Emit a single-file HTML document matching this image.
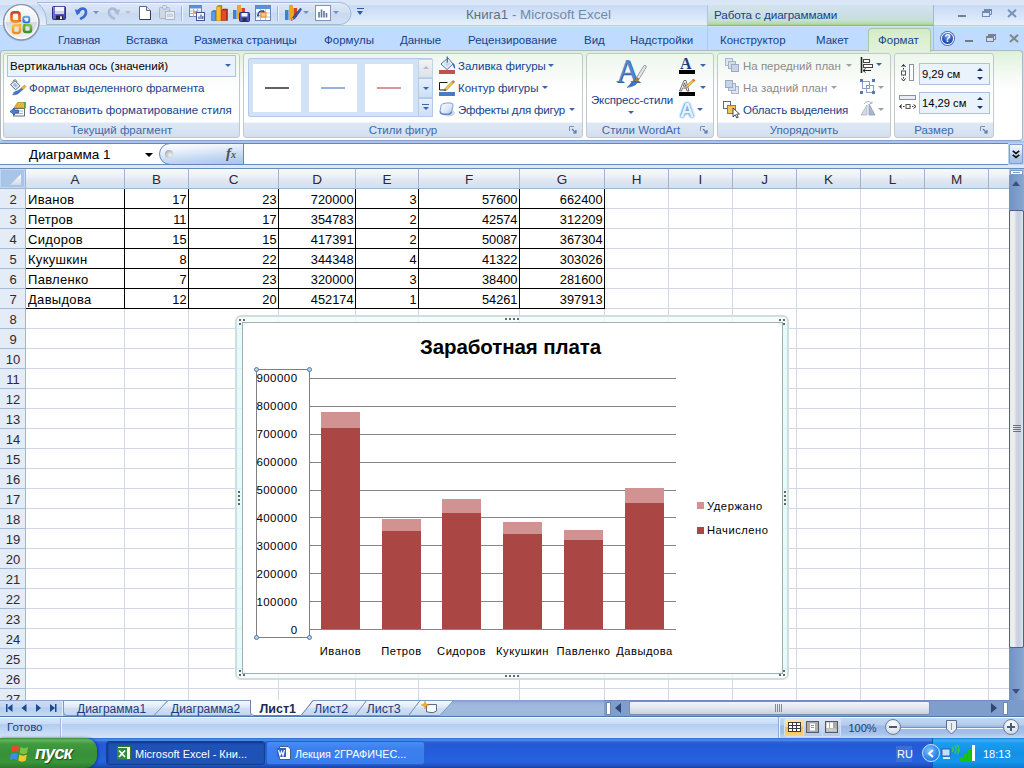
<!DOCTYPE html>
<html><head><meta charset="utf-8">
<style>
*{box-sizing:border-box;margin:0;padding:0}
html,body{width:1024px;height:768px;overflow:hidden;background:#fff}
body{font-family:"Liberation Sans",sans-serif;font-size:11.5px;color:#15428b;position:relative}
.a{position:absolute}
svg{position:absolute;overflow:visible}
.t{position:absolute;white-space:nowrap;line-height:14px;height:14px}
/* title + tabs */
#titlebar{left:0;top:0;width:1024px;height:27px;background:linear-gradient(#d9e6f9 0,#dae6f7 1px,#dbe6f6 5px,#c8dbf6 5px,#d3e3f8 14px,#e4eefc 24px,#e4f4fe 25px,#b0cdf5 25px,#b0cdf5 26px,#d4e3f6 26px,#d4e3f6 27px)}
#tabrow{left:0;top:27px;width:1024px;height:23px;background:#bfdbff}
#ctxhead{left:707px;top:5px;width:227px;height:21px;background:linear-gradient(#d3e3ee 0,#cbdee6 50%,#c5dfd2 75%,#aedb9b 92%,#7cc95a 96%,#7cc95a 100%);border-left:1px solid #b4c6d6;border-right:1px solid #a8b8c8}
#ctxtabs{left:707px;top:26px;width:227px;height:24px;border-left:1px solid #b3cbe8;border-right:1px solid #a9bdd6}
.tab{position:absolute;top:33px;font-size:11.5px;color:#15428b;white-space:nowrap;line-height:14px}
/* ribbon */
#ribtop{left:0;top:50px;width:1024px;height:92px;background:#bfdbff}
#ribbon{left:0;top:50px;width:1023px;height:91px;border:1px solid #b1b8c0;border-bottom-color:#86a3c9;border-radius:4px;background:linear-gradient(#d9efd7 0,#e0f3dd 3px,#eaf6e8 12px,#f6fbf5 26px,#ffffff 40px,#fff 100%)}
.grp{position:absolute;top:53px;height:85px;border:1px solid #c3c8ce;border-radius:3px;background:linear-gradient(#eef7ec 0,#f4f9f3 14px,#fbfdfb 28px,#fff 40px,#fff 68px,#dfe8f5 69px,#d2deef 84px)}
.gl{position:absolute;top:123px;font-size:11.5px;color:#3e6aaa;white-space:nowrap;line-height:14px;text-align:center}
.dis{color:#8c8c8c}
.arr{position:absolute;width:0;height:0;border-left:3px solid transparent;border-right:3px solid transparent;border-top:3px solid #3a66a7}
.arr.g{border-top-color:#a0a0a0}
/* formula bar */
#fbar{left:0;top:141px;width:1024px;height:28px;background:linear-gradient(#aac5ea 0,#aac5ea 2px,#6487b8 2px,#6487b8 3px,#fff 3px,#fff 23px,#6b8dbd 23px,#6b8dbd 24px,#dbe8f8 24px,#dbe8f8 27px,#6b8dbd 27px,#6b8dbd 28px)}
/* grid */
#grid{left:0;top:169px;width:1009px;height:531px;background:#fff;overflow:hidden}
.ch{position:absolute;top:0;height:20px;background:linear-gradient(#f7fafd 0,#ebf0f7 8px,#e0e7f2 11px,#d6dfec 19px);border-right:1px solid #9eb6ce;border-bottom:1px solid #9eb6ce;text-align:center;font-size:13.5px;line-height:21px;color:#2a2a30}
.rh{position:absolute;left:0;width:26px;height:20px;background:#e4ecf7;border-right:1px solid #9eb6ce;border-bottom:1px solid #a5bad4;text-align:center;font-size:13px;padding-left:1px;line-height:21px;color:#2a2a30}
.vl{position:absolute;top:20px;width:1px;height:512px;background:#d0d7e5}
.hl{position:absolute;left:26px;height:1px;width:984px;background:#d0d7e5}
.c{position:absolute;font-size:13px;letter-spacing:.3px;color:#000;line-height:21px;height:20px;white-space:nowrap;overflow:hidden}
.r{text-align:right;letter-spacing:0;font-size:12.8px;padding-right:.5px}
.cf{font-size:11.5px;letter-spacing:.45px;color:#000;line-height:14px}
.bv{position:absolute;width:1px;background:#000}
.bh{position:absolute;height:1px;background:#000}
</style></head>
<body>
<div class="a" id="titlebar"></div>
<div class="a" id="tabrow"></div>
<div class="a" id="ctxhead"></div>
<div class="a" id="ctxtabs"></div>
<div class="a" id="ribtop"></div>
<div class="a" id="ribbon"></div>
<div class="a" id="fbar"></div>
<!-- QAT pill -->
<svg style="left:0;top:0" width="360" height="28" viewBox="0 0 360 28">
 <defs>
  <linearGradient id="qp" x1="0" y1="0" x2="0" y2="1"><stop offset="0" stop-color="#dfe9f7"/><stop offset=".45" stop-color="#d0dff3"/><stop offset=".5" stop-color="#c8d9f0"/><stop offset="1" stop-color="#d2e1f5"/></linearGradient>
  <linearGradient id="og" x1="0" y1="0" x2="0" y2="1"><stop offset="0" stop-color="#ffffff"/><stop offset=".48" stop-color="#eceef3"/><stop offset=".5" stop-color="#d3d8e1"/><stop offset="1" stop-color="#f3f5f8"/></linearGradient>
  <linearGradient id="lr" x1="0" y1="0" x2="0" y2="1"><stop offset="0" stop-color="#d9401c"/><stop offset="1" stop-color="#f28c1e"/></linearGradient>
  <linearGradient id="ly" x1="0" y1="0" x2="0" y2="1"><stop offset="0" stop-color="#fbbf3a"/><stop offset="1" stop-color="#ef8f16"/></linearGradient>
  <linearGradient id="lg" x1="0" y1="0" x2="0" y2="1"><stop offset="0" stop-color="#7fc043"/><stop offset="1" stop-color="#3f8f2a"/></linearGradient>
  <linearGradient id="lb" x1="0" y1="0" x2="0" y2="1"><stop offset="0" stop-color="#5aa6e6"/><stop offset="1" stop-color="#2a6fc4"/></linearGradient>
 </defs>
 <path d="M37 2.500 H340 A11 11 0 0 1 340 24.500 H46.500 A25.500 25.500 0 0 0 37 2.500 Z" fill="url(#qp)" stroke="#a2b9d9"/>
 <path d="M38 3.500 H340" stroke="#eef4fc" fill="none"/>
</svg>
<!-- Office orb -->
<svg style="left:0;top:0" width="44" height="46" viewBox="0 0 44 46">
 <circle cx="21.300" cy="23" r="18.400" fill="rgba(90,110,150,.25)"/>
 <circle cx="21.300" cy="22.300" r="17.700" fill="url(#og)" stroke="#8893a8" stroke-width="1.400"/>
 <circle cx="21.300" cy="22.300" r="16.300" fill="none" stroke="#fff" stroke-width="1" opacity=".8"/>
 <rect x="11.500" y="12.300" width="8" height="9" rx="2.400" fill="none" stroke="url(#lr)" stroke-width="2.700"/>
 <rect x="23.300" y="16.800" width="6" height="5.600" rx="1.800" fill="none" stroke="url(#lb)" stroke-width="1.900"/>
 <rect x="13" y="25.300" width="7" height="7.600" rx="2.200" fill="none" stroke="url(#ly)" stroke-width="2.500"/>
 <rect x="24" y="25" width="7" height="7" rx="2.200" fill="none" stroke="url(#lg)" stroke-width="2.700"/>
 <rect x="17" y="17" width="8" height="12" fill="#eef0f4" opacity=".0"/>
 <circle cx="20.200" cy="20.800" r="1.100" fill="#e0531f"/><circle cx="24.300" cy="20.800" r="1.100" fill="#3b8ad6"/>
 <circle cx="20.200" cy="25" r="1.100" fill="#f5a81c"/><circle cx="24.300" cy="25" r="1.100" fill="#5aa531"/>
</svg>
<!-- QAT icons -->
<svg style="left:52px;top:6px" width="14" height="14" viewBox="0 0 14 14"><defs><linearGradient id="sv" x1="0" y1="0" x2="1" y2="1"><stop offset="0" stop-color="#8a88dc"/><stop offset="1" stop-color="#3f3aa8"/></linearGradient></defs><rect x=".5" y=".5" width="13" height="13" rx="1" fill="url(#sv)" stroke="#2e2a86"/><rect x="3" y=".8" width="9" height="7" fill="#f4f5fa"/><rect x="3" y="5" width="9" height="2.800" fill="#cfd2e2"/><rect x="4" y="9.500" width="7" height="4" fill="#22223c"/><rect x="8" y="10.300" width="2" height="2.800" fill="#e8e9f4"/></svg>
<svg style="left:74px;top:5px" width="15" height="15" viewBox="0 0 15 15"><path d="M4.500 7.500 C5 3 11.500 2 12 6.500 C12.300 10 9.500 12.500 7 13.500" fill="none" stroke="#3b68d2" stroke-width="2.600" stroke-linecap="round"/><path d="M.8 4.500 L7.500 5 L3 10.500Z" fill="#3b68d2"/></svg>
<div class="arr" style="left:93px;top:11px;border-top-color:#6f8fc3"></div>
<svg style="left:106px;top:5px" width="15" height="15" viewBox="0 0 15 15"><path d="M10.500 7.500 C10 3 3.500 2 3 6.500 C2.700 10 5.500 12.500 8 13.500" fill="none" stroke="#a9bbd8" stroke-width="2.600" stroke-linecap="round"/><path d="M14.200 4.500 L7.500 5 L12 10.500Z" fill="#a9bbd8"/></svg>
<div class="arr" style="left:125px;top:11px;border-top-color:#b3c0d6"></div>
<svg style="left:139px;top:6px" width="12" height="14" viewBox="0 0 12 14"><path d="M.5 .5 H7.500 L11.500 4.500 V13.500 H.5 Z" fill="#fff" stroke="#5d6a82"/><path d="M7.500 .5 V4.500 H11.500" fill="#dfe5ee" stroke="#5d6a82"/><path d="M1 13.500 H11.500 V5" fill="none" stroke="#2f3a55" stroke-width="1"/></svg>
<svg style="left:159px;top:5px" width="16" height="15" viewBox="0 0 16 15"><rect x=".5" y="2.500" width="10" height="11" rx="1" fill="#cfd7e4" stroke="#a9b5c9"/><rect x="3.500" y=".5" width="4" height="3.500" rx="1" fill="#dfe5ef" stroke="#a9b5c9"/><rect x="6.500" y="6.500" width="9" height="8" fill="#e9edf4" stroke="#a9b5c9"/><rect x="8.500" y="9" width="5" height="2.500" fill="#d3dae6" stroke="#b6c0d1" stroke-width=".6"/></svg>
<div class="a" style="left:181px;top:6px;width:1px;height:15px;background:#9fb5d3"></div><div class="a" style="left:182px;top:6px;width:1px;height:15px;background:#eef4fc"></div>
<svg style="left:189px;top:5px" width="17" height="17" viewBox="0 0 17 17"><rect x=".5" y=".5" width="12" height="11" fill="#fff" stroke="#6f86b5"/><rect x="1" y="1" width="11" height="2.500" fill="#5b8fd8"/><path d="M1 6h11M1 8.500h11M4.500 3.500v8M8.500 3.500v8" stroke="#a9b9d6"/><rect x="5" y="6" width="3.500" height="2.500" fill="#f59a3c"/><rect x="7.500" y="7.500" width="8" height="8" fill="#f4f6fb" stroke="#3f5484"/><path d="M10 14v-2.500M12 14v-4.500M13.800 14v-3" stroke="#4a6aa8" stroke-width="1.300"/></svg>
<svg style="left:211px;top:5px" width="17" height="16" viewBox="0 0 17 16"><path d="M.5 7 L2 5.500 H5.500 L5.500 15.500 H.5Z" fill="#3f7fd0" stroke="#2a5aa5" stroke-width=".5"/><rect x=".5" y="7" width="3.500" height="8.500" fill="#5b9be8"/><path d="M5.500 2 L7 .5 H11 V15.500 H5.500Z" fill="#c98a10" stroke="#9a6a08" stroke-width=".5"/><rect x="5.500" y="2" width="4" height="13.500" fill="#f7c02a"/><path d="M10.500 5.500 L12 4 H16.500 V15.500 H10.500Z" fill="#b52a18" stroke="#8a2010" stroke-width=".5"/><rect x="10.500" y="5.500" width="4.500" height="10" fill="#e54a30"/></svg>
<svg style="left:232px;top:4px" width="18" height="18" viewBox="0 0 18 18"><rect x="1" y="6" width="3.500" height="9" fill="#3f7fd0"/><rect x="5" y="1" width="4" height="14" fill="#f2a620"/><rect x="9.500" y="4" width="3.500" height="8" fill="#d9402a"/><rect x="7.500" y="8.500" width="10" height="9" rx="1" fill="#4a52b5" stroke="#2b2f82"/><rect x="9.500" y="9" width="6" height="3.500" fill="#f2f3fb"/><rect x="10.500" y="14" width="4" height="3" fill="#2a2b56"/></svg>
<svg style="left:255px;top:5px" width="16" height="16" viewBox="0 0 16 16"><rect x=".5" y=".5" width="15" height="15" fill="#fff" stroke="#6f86b5"/><rect x="1" y="1" width="14" height="3" fill="#5b8fd8"/><path d="M1 8h14M1 12h14M5.500 4v11M10.500 4v11" stroke="#b4c2dc"/><rect x="6" y="7.500" width="5" height="4.500" fill="#fbc48e" stroke="#ee8a2c"/><path d="M3 11 C2.500 7 6 5 9 6.500" fill="none" stroke="#2b4aa0" stroke-width="1.400"/><path d="M1.500 9.500 L3 12 L5 10Z M8 4.800 L10 6.800 L7.500 7.800Z" fill="#2b4aa0"/></svg>
<div class="a" style="left:277px;top:6px;width:1px;height:15px;background:#9fb5d3"></div><div class="a" style="left:278px;top:6px;width:1px;height:15px;background:#eef4fc"></div>
<svg style="left:284px;top:4px" width="18" height="18" viewBox="0 0 18 18"><rect x="1" y="6" width="3.500" height="10" fill="#3f7fd0"/><rect x="5" y="1" width="4" height="15" fill="#f2a620"/><rect x="9.500" y="4" width="3.500" height="9" fill="#d9402a"/><path d="M16.500 4 L9 13 L7 16.500 L10.500 15 L17.500 5.500 Z" fill="#3559b4" stroke="#1f3680" stroke-width=".6"/><path d="M7 16.500 L8.200 13.800 L10.200 15.200 Z" fill="#e8b04a"/></svg>
<div class="arr" style="left:303px;top:11px;border-top-color:#6f8fc3"></div>
<svg style="left:315px;top:5px" width="16" height="16" viewBox="0 0 16 16"><rect x=".5" y=".5" width="15" height="15" fill="#fff" stroke="#7f93b8"/><path d="M4 12.500V7M6.500 12.500V4.500M9 12.500V6M11.500 12.500V8" stroke="#5a76ad" stroke-width="1.600"/></svg>
<div class="arr" style="left:333px;top:11px;border-top-color:#6f8fc3"></div>
<div class="a" style="left:357px;top:8px;width:7px;height:1px;background:#34569c"></div>
<div class="arr" style="left:357px;top:11px;border-left-width:3.5px;border-right-width:3.5px;border-top-width:4px;border-top-color:#34569c"></div>
<!-- title text -->
<div class="t" style="left:466px;top:7px;font-size:13.4px;color:#7189ab;line-height:15px"><span style="color:#646f80">Книга1</span> - Microsoft Excel</div>
<div class="t" style="left:714px;top:8px;font-size:11.7px;letter-spacing:-.1px;color:#15428b">Работа с диаграммами</div>
<!-- window controls -->
<div class="a" style="left:958px;top:15px;width:8px;height:2px;background:#76808f"></div>
<svg style="left:982px;top:9px" width="10" height="8" viewBox="0 0 10 8"><path d="M2.500 .5 H9.500 V5.500 H7.500" fill="none" stroke="#7088b0"/><rect x="2" y="0" width="8" height="2" fill="#7088b0"/><rect x=".5" y="2.500" width="7" height="5" fill="#dce7f7" stroke="#7088b0"/><rect x="0" y="2" width="8" height="2" fill="#7088b0"/></svg>
<svg style="left:1007px;top:9px" width="10" height="9" viewBox="0 0 10 9"><path d="M1 .8 L9 8 M9 .8 L1 8" stroke="#7a92b8" stroke-width="2"/></svg>
<!-- tabs -->
<div class="tab" style="left:58px;letter-spacing:-.25px">Главная</div>
<div class="tab" style="left:126px;letter-spacing:-.2px">Вставка</div>
<div class="tab" style="left:194px;letter-spacing:-.1px">Разметка страницы</div>
<div class="tab" style="left:324px">Формулы</div>
<div class="tab" style="left:400px;letter-spacing:-.1px">Данные</div>
<div class="tab" style="left:468px">Рецензирование</div>
<div class="tab" style="left:584px">Вид</div>
<div class="tab" style="left:630px">Надстройки</div>
<div class="tab" style="left:720px">Конструктор</div>
<div class="tab" style="left:816px">Макет</div>
<div class="a" style="left:868px;top:28px;width:63px;height:24px;border:1px solid #a9c7a0;border-bottom:none;border-radius:4px 4px 0 0;background:linear-gradient(#d3ebc6 0,#dbefd0 40%,#e2f2da 100%)"></div>
<div class="tab" style="left:878px">Формат</div>
<!-- help + doc controls -->
<div class="a" style="left:941px;top:32px;width:13px;height:13px;border-radius:50%;background:radial-gradient(circle at 50% 30%,#7fa4ea,#2a56bb 55%,#1a388a);border:1px solid #eef3fc;box-shadow:0 0 0 1px #4f6fb0"></div>
<div class="t" style="left:944.500px;top:32px;font-size:10px;font-weight:bold;color:#fff;line-height:13px">?</div>
<div class="a" style="left:965px;top:40px;width:8px;height:2px;background:#777b82"></div>
<svg style="left:986px;top:34px" width="10" height="8" viewBox="0 0 10 8"><path d="M2.500 .5 H9.500 V5.500 H7.500" fill="none" stroke="#7b7f86"/><rect x="2" y="0" width="8" height="2" fill="#7b7f86"/><rect x=".5" y="2.500" width="7" height="5" fill="#c5dcfb" stroke="#7b7f86"/><rect x="0" y="2" width="8" height="2" fill="#7b7f86"/></svg>
<svg style="left:1009px;top:34px" width="10" height="9" viewBox="0 0 10 9"><path d="M1 .8 L9 8 M9 .8 L1 8" stroke="#82868e" stroke-width="2"/></svg>
<!-- groups -->
<div class="grp" style="left:3px;width:237px"></div>
<div class="grp" style="left:243px;width:340px"></div>
<div class="grp" style="left:586px;width:128px"></div>
<div class="grp" style="left:717px;width:174px"></div>
<div class="grp" style="left:894px;width:100px"></div>
<div class="gl" style="left:3px;width:237px">Текущий фрагмент</div>
<div class="gl" style="left:243px;width:320px">Стили фигур</div>
<div class="gl" style="left:586px;width:110px">Стили WordArt</div>
<div class="gl" style="left:717px;width:174px">Упорядочить</div>
<div class="gl" style="left:894px;width:80px">Размер</div>
<!-- dialog launchers -->
<svg style="left:569px;top:126px" width="8" height="8" viewBox="0 0 8 8"><path d="M.5 5V.5H5" fill="none" stroke="#7c93b5"/><path d="M3 3L7 7M7 4V7H4" fill="none" stroke="#5c7aa8" stroke-width="1.200"/></svg>
<svg style="left:700px;top:126px" width="8" height="8" viewBox="0 0 8 8"><path d="M.5 5V.5H5" fill="none" stroke="#7c93b5"/><path d="M3 3L7 7M7 4V7H4" fill="none" stroke="#5c7aa8" stroke-width="1.200"/></svg>
<svg style="left:980px;top:126px" width="8" height="8" viewBox="0 0 8 8"><path d="M.5 5V.5H5" fill="none" stroke="#7c93b5"/><path d="M3 3L7 7M7 4V7H4" fill="none" stroke="#5c7aa8" stroke-width="1.200"/></svg>
<!-- group 1 -->
<div class="a" style="left:7px;top:55px;width:229px;height:22px;border:1px solid #abc1de;background:#eaf2fb"></div>
<div class="t" style="left:10px;top:59px;color:#000;font-size:11.6px">Вертикальная ось (значений)</div>
<div class="arr" style="left:225px;top:64px"></div>
<svg style="left:9px;top:79px" width="18" height="18" viewBox="0 0 18 18"><path d="M4 2.500 C4.500 .3 7.500 .3 7.800 2.800" fill="none" stroke="#4a5a7a" stroke-width=".9"/><path d="M1.500 5.500 L6 1.800 L11 6.800 L6.500 10.800 Z" fill="#fcfdff" stroke="#3f4d6b" stroke-width=".9"/><path d="M3.500 5.700 L6 3.600 L9 6.700 L6.500 8.800Z" fill="#9dbde8"/><path d="M3.500 15.500 C6 16.500 9.500 15 11.500 12.500 L14 10.500 L12.500 9 L10 11 C8 12.500 6 12.200 4.500 13.800 C5.500 14.200 4.500 15.200 3.500 15.500Z" fill="#3f78d0" stroke="#2a55a5" stroke-width=".5"/><path d="M12.300 9 L15.500 6 L17 7.500 L14 10.500Z" fill="#f0b73a" stroke="#9a6b14" stroke-width=".5"/></svg>
<div class="t" style="left:29px;top:81px">Формат выделенного фрагмента</div>
<svg style="left:9px;top:100px" width="18" height="18" viewBox="0 0 18 18"><rect x="4.500" y="8.500" width="11" height="7.500" fill="#fff" stroke="#5d6b85"/><path d="M6 11h8M6 13.500h8" stroke="#9fb1d0"/><path d="M5 8 L8.500 2.500 L16 2.500 L16 8 Z" fill="#f3c14a" stroke="#a6781a" stroke-width=".7"/><path d="M7 7.500 L9.500 3.500 M9.500 7.500 L12 3.500 M12 7.500 L14.500 3.500" stroke="#c58f1e" stroke-width=".7"/><rect x="15" y="2" width="1.800" height="6.500" fill="#5aa531"/><path d="M1 11.500 L5.500 8 V10 H9.500 V13 H5.500 V15Z" fill="#4e7fd0" stroke="#2a4f9a" stroke-width=".7"/></svg>
<div class="t" style="left:29px;top:103px">Восстановить форматирование стиля</div>
<!-- group 2: shape styles gallery -->
<div class="a" style="left:248px;top:58px;width:185px;height:59px;border:1px solid #b3cbe8;border-radius:2px;background:#d3e3f7"></div>
<div class="a" style="left:253px;top:64px;width:48px;height:48px;background:#fff"></div>
<div class="a" style="left:309px;top:64px;width:48px;height:48px;background:#fff"></div>
<div class="a" style="left:365px;top:64px;width:48px;height:48px;background:#fff"></div>
<div class="a" style="left:265px;top:87px;width:24px;height:2px;background:#636363"></div>
<div class="a" style="left:321px;top:87px;width:24px;height:2px;background:#95b3d7"></div>
<div class="a" style="left:377px;top:87px;width:24px;height:2px;background:#d99694"></div>
<div class="a" style="left:418px;top:59px;width:15px;height:19px;border:1px solid #c3d3e6;background:linear-gradient(#f1f3f6,#dde2ea)"></div>
<div class="a" style="left:418px;top:78px;width:15px;height:20px;border:1px solid #b3cbe8;background:linear-gradient(#e6effb,#cddff5)"></div>
<div class="a" style="left:418px;top:98px;width:15px;height:19px;border:1px solid #b3cbe8;background:linear-gradient(#e6effb,#cddff5)"></div>
<div class="arr g" style="left:423px;top:66px;border-top:none;border-bottom:3px solid #b6bcc6"></div>
<div class="arr" style="left:423px;top:87px"></div>
<div class="a" style="left:422px;top:104px;width:7px;height:1px;background:#3a66a7"></div>
<div class="arr" style="left:423px;top:107px"></div>
<svg style="left:438px;top:55px" width="18" height="20" viewBox="0 0 18 20"><rect x="1" y="15" width="16" height="4" fill="#c0504d"/><path d="M3 9 L10 3 L15 9 L9 14.500 Z" fill="#fbfdff" stroke="#3d6ab5" stroke-width="1"/><path d="M5.500 9 L10 5.200 L13 9 L9 12.500Z" fill="#c9dcf5"/><path d="M9.300 1.500 V7.500" stroke="#5a6a88" stroke-width="1.300"/><path d="M15 8 C17 9 17.500 11.500 17 14 C15.500 13 14.500 11 15 8Z" fill="#3f74c8"/></svg>
<div class="t" style="left:458px;top:59px">Заливка фигуры</div><div class="arr" style="left:548px;top:64px"></div>
<svg style="left:438px;top:79px" width="18" height="18" viewBox="0 0 18 18"><rect x="1" y="13" width="16" height="4" fill="#4a7ac2"/><path d="M9.500 3.500 H1.500 V11 H8" fill="none" stroke="#1a1a1a" stroke-width="1"/><path d="M14 2.500 L7 9.500 L6.300 11.800 L8.600 11 L15.500 4 Z" fill="#f4d14a" stroke="#8a6a1a" stroke-width=".6"/><path d="M14 2.500 L15.200 1.500 Q16.500 1.500 16.500 3 L15.500 4Z" fill="#e27a6a" stroke="#a04a3a" stroke-width=".4"/><path d="M6.300 11.800 L6.800 10 L8.300 11.200Z" fill="#333"/></svg>
<div class="t" style="left:458px;top:81px">Контур фигуры</div><div class="arr" style="left:542px;top:86px"></div>
<svg style="left:438px;top:101px" width="18" height="17" viewBox="0 0 18 17"><defs><linearGradient id="ef" x1="0" y1="0" x2="1" y2="1"><stop offset="0" stop-color="#ffffff"/><stop offset=".6" stop-color="#dbe6f8"/><stop offset="1" stop-color="#9db7e6"/></linearGradient></defs><ellipse cx="10.500" cy="12" rx="6.500" ry="3.500" fill="#c9cdd6" opacity=".8"/><path d="M4.500 3 Q8 1.500 13 2 Q15.500 2.300 15 5 L13.500 11 Q13 13.500 10 13.500 L4.500 13.200 Q1.500 13 2 10 L3 5 Q3.300 3.400 4.500 3Z" fill="url(#ef)" stroke="#7f9fdc" stroke-width="1"/><path d="M2.300 10.500 Q2.500 12.800 4.800 13 L10 13.300 Q12.800 13.200 13.400 11" fill="none" stroke="#5f86d0" stroke-width="1.300"/></svg>
<div class="t" style="left:458px;top:103px;letter-spacing:-.2px">Эффекты для фигур</div><div class="arr" style="left:569px;top:108px"></div>
<!-- group 3: WordArt -->
<div class="t" style="left:616px;top:52px;font-family:'Liberation Serif',serif;font-size:33px;line-height:38px;height:38px;color:#4f86cf;text-shadow:1px 1px 0 #2f5fa8">A</div>
<svg style="left:624px;top:64px" width="24" height="26" viewBox="0 0 24 26"><path d="M20 1.500 L12.500 13.500 L15 15.200 L22.300 3.200 Q22.500 1 20 1.500Z" fill="#e4e6ec" stroke="#7a7d88" stroke-width=".7"/><path d="M12.500 13.500 L15 15.200 L13 18.500 L10 16.800Z" fill="#a87f3a" stroke="#6f5220" stroke-width=".5"/><path d="M10 16.800 L13 18.500 C12 21.500 8 22.500 3 23.500 C6 21.500 6.500 18.500 10 16.800Z" fill="#3f74c8" stroke="#2a55a5" stroke-width=".5"/></svg>
<div class="t" style="left:591px;top:93px;letter-spacing:-.15px">Экспресс-стили</div>
<div class="arr" style="left:628px;top:111px"></div>
<div class="t" style="left:680px;top:56px;font-family:'Liberation Serif',serif;font-weight:bold;font-size:16px;line-height:16px;height:16px;color:#1f3e7c">A</div>
<div class="a" style="left:679px;top:70px;width:16px;height:4px;background:#000"></div>
<div class="arr" style="left:700px;top:64px"></div>
<svg style="left:678px;top:78px" width="18" height="14" viewBox="0 0 18 14"><path d="M1.500 13 L6 2.500 L8 2.500 L11 13 L9 13 L8.200 10 L4.500 10 L3.500 13Z M5.200 8.200 H7.700 L6.700 4.800Z" fill="#fff" stroke="#4a4a4a" stroke-width=".8" fill-rule="evenodd"/><path d="M15.500 1 L8.500 7.500 L7.800 9.800 L10 9 L17 2.500 Z" fill="#f3c24a" stroke="#8a6a1a" stroke-width=".5"/><path d="M15.500 1 L17 2.500 L16 3.400 L14.500 1.900Z" fill="#e2574a"/></svg>
<div class="a" style="left:679px;top:92px;width:16px;height:4px;background:#000"></div>
<div class="arr" style="left:700px;top:86px"></div>
<div class="t" style="left:680px;top:101px;font-size:19.5px;font-weight:bold;line-height:18px;height:18px;color:#e6f2fc;text-shadow:0 0 2px #4e9be0,0 0 3px #4e9be0,0 0 1px #2b7fd0">A</div>
<div class="arr" style="left:697px;top:108px"></div>
<!-- group 4: arrange -->
<svg style="left:724px;top:58px" width="16" height="16" viewBox="0 0 16 16"><rect x="1.500" y=".5" width="7" height="7" fill="#dfe6f1" stroke="#a9b7cf"/><rect x="4.500" y="3.500" width="7" height="7" fill="#d3dcea" stroke="#a3b2cb"/><rect x="7.500" y="6.500" width="7" height="7" fill="#c8d4e6" stroke="#9aabc6"/></svg>
<div class="t dis" style="left:743px;top:59px">На передний план</div><div class="arr g" style="left:846px;top:64px"></div>
<svg style="left:724px;top:80px" width="16" height="16" viewBox="0 0 16 16"><rect x="7.500" y="6.500" width="7" height="7" fill="#dfe6f1" stroke="#a9b7cf"/><rect x="4.500" y="3.500" width="7" height="7" fill="#d3dcea" stroke="#a3b2cb"/><rect x="1.500" y=".5" width="7" height="7" fill="#c8d4e6" stroke="#9aabc6"/></svg>
<div class="t dis" style="left:743px;top:81px">На задний план</div><div class="arr g" style="left:831px;top:86px"></div>
<svg style="left:723px;top:101px" width="18" height="17" viewBox="0 0 18 17"><rect x=".5" y=".5" width="7" height="7" fill="#fff" stroke="#5d6a80"/><rect x="4.500" y="4.500" width="8" height="8" fill="#f2c45a" stroke="#a67c1a"/><path d="M10 7 V16 L12.200 13.800 L13.800 17 L15.200 16.300 L13.700 13.200 L16.500 13 Z" fill="#fff" stroke="#222" stroke-width=".8"/></svg>
<div class="t" style="left:743px;top:103px;letter-spacing:-.15px">Область выделения</div>
<svg style="left:860px;top:57px" width="14" height="16" viewBox="0 0 14 16"><path d="M1.500 0 V16" stroke="#222" stroke-width="1.600"/><rect x="3.500" y="2.500" width="6" height="3" fill="#fff" stroke="#444"/><rect x="3.500" y="7.500" width="9" height="3" fill="#fff" stroke="#444"/><path d="M3 13.500 H11 M3 13.500 l2.500 -2 M3 13.500 l2.500 2" stroke="#222" stroke-width="1" fill="none"/></svg>
<div class="arr" style="left:876px;top:63px"></div>
<svg style="left:860px;top:79px" width="16" height="16" viewBox="0 0 16 16"><rect x="2.500" y="2.500" width="7" height="7" fill="none" stroke="#8a9ec6"/><rect x="6.500" y="6.500" width="7" height="7" fill="none" stroke="#8a9ec6"/><rect x="0" y="0" width="3" height="3" fill="#5a79b4"/><rect x="12" y="0" width="3" height="3" fill="#5a79b4"/><rect x="0" y="12" width="3" height="3" fill="#5a79b4"/><rect x="12" y="12" width="3" height="3" fill="#5a79b4"/></svg>
<div class="arr g" style="left:878px;top:86px"></div>
<svg style="left:860px;top:101px" width="16" height="15" viewBox="0 0 16 15"><path d="M7 14 L1 14 L7 4 Z" fill="#d3d9e4" stroke="#aab4c6" stroke-width=".8"/><path d="M9 14 L15 14 L9 3 Z" fill="#a9b6cc" stroke="#8e9db8" stroke-width=".8"/><path d="M4 3 C6 0 10 0 12 2.500 l-2 0 m2 0 l0 -2" fill="none" stroke="#aab4c6" stroke-width="1"/></svg>
<div class="arr g" style="left:878px;top:108px"></div>
<!-- group 5: size -->
<svg style="left:900px;top:64px" width="15" height="18" viewBox="0 0 15 18"><rect x="9.500" y=".5" width="4" height="16" fill="#fff" stroke="#8a93a6"/><path d="M3.500 1 V16" stroke="#333" stroke-dasharray="1.500 1.500"/><path d="M1.500 3 L3.500 .5 L5.500 3 M1.500 14.500 L3.500 17 L5.500 14.500" fill="none" stroke="#222"/><rect x="1.500" y="7" width="4" height="4" fill="#fff" stroke="#555"/></svg>
<div class="a" style="left:919px;top:63px;width:71px;height:22px;border:1px solid #abc1de;background:#eaf2fb"></div>
<div class="t" style="left:922px;top:67px;color:#000;font-size:11.2px">9,29 см</div>
<div class="arr" style="left:977px;top:68px;border-top:none;border-bottom:3.5px solid #1a3670;border-left-width:3px;border-right-width:3px"></div>
<div class="arr" style="left:977px;top:77px;border-top:3.5px solid #1a3670;border-left-width:3px;border-right-width:3px"></div>
<svg style="left:899px;top:95px" width="18" height="15" viewBox="0 0 18 15"><rect x=".5" y=".5" width="16" height="4" fill="#e9eef6" stroke="#8a93a6"/><path d="M1 11.500 H16" stroke="#333" stroke-dasharray="1.500 1.500"/><path d="M3 9.500 L.5 11.500 L3 13.500 M14.500 9.500 L17 11.500 L14.500 13.500" fill="none" stroke="#222"/><rect x="7" y="9.500" width="4" height="4" fill="#fff" stroke="#555"/></svg>
<div class="a" style="left:919px;top:92px;width:71px;height:22px;border:1px solid #abc1de;background:#eaf2fb"></div>
<div class="t" style="left:922px;top:96px;color:#000;font-size:11.2px">14,29 см</div>
<div class="arr" style="left:977px;top:97px;border-top:none;border-bottom:3.5px solid #1a3670;border-left-width:3px;border-right-width:3px"></div>
<div class="arr" style="left:977px;top:106px;border-top:3.5px solid #1a3670;border-left-width:3px;border-right-width:3px"></div>
<!-- formula bar contents -->
<div class="t" style="left:29px;top:147px;font-size:13.5px;color:#000;line-height:15px;height:15px">Диаграмма 1</div>
<div class="arr" style="left:145px;top:153px;border-top-color:#000;border-left-width:4px;border-right-width:4px;border-top-width:4px"></div>
<div class="a" style="left:159px;top:143px;width:85px;height:22px;border:1px solid #6487b8;border-radius:11px 0 0 11px;background:linear-gradient(175deg,#ffffff 0,#eef4fc 25%,#c9dcf3 60%,#a6c3ea 100%)"></div>
<div class="a" style="left:165px;top:150px;width:8px;height:8px;border-radius:50%;background:radial-gradient(circle at 65% 65%,#f4f5f7 0,#c9ccd2 45%,#8f959e 100%)"></div>
<div class="t" style="left:226px;top:146px;font-family:'Liberation Serif',serif;font-style:italic;font-weight:bold;font-size:15px;color:#4f5358;line-height:15px">f<span style="font-size:10px;font-weight:bold">x</span></div>

<div class="a" style="left:1008px;top:143px;width:16px;height:22px;background:#bdd3ee"></div><div class="a" style="left:1009px;top:144px;width:14px;height:20px;border:1px solid #7f9fcf;border-radius:1px;background:linear-gradient(#f4f8fd,#d3e1f4 45%,#b9cfed 55%,#a3bfe6)"></div>
<svg style="left:1012px;top:150px" width="8" height="9" viewBox="0 0 8 9"><path d="M.8 .8 L4 3.500 L7.200 .8 M.8 4.800 L4 7.500 L7.200 4.800" fill="none" stroke="#111" stroke-width="1.700"/></svg>
<div class="a" id="grid">
<div class="ch" style="left:0;width:26px;background:#a9c4e9;box-shadow:inset 1px 1px 0 #c3d7f1,inset -1px -1px 0 #c3d7f1"></div>
<svg style="left:10px;top:5px" width="11" height="11" viewBox="0 0 11 11"><defs><linearGradient id="cg" x1="0" y1="0" x2="0" y2="1"><stop offset="0" stop-color="#fff"/><stop offset="1" stop-color="#d3d9e3"/></linearGradient></defs><path d="M11 0 V11 H0 Z" fill="url(#cg)"/></svg>
<div class="ch" style="left:26px;width:99px">A</div>
<div class="vl" style="left:124px"></div>
<div class="ch" style="left:125px;width:64px">B</div>
<div class="vl" style="left:188px"></div>
<div class="ch" style="left:189px;width:90px">C</div>
<div class="vl" style="left:278px"></div>
<div class="ch" style="left:279px;width:77px">D</div>
<div class="vl" style="left:355px"></div>
<div class="ch" style="left:356px;width:63px">E</div>
<div class="vl" style="left:418px"></div>
<div class="ch" style="left:419px;width:101px">F</div>
<div class="vl" style="left:519px"></div>
<div class="ch" style="left:520px;width:85px">G</div>
<div class="vl" style="left:604px"></div>
<div class="ch" style="left:605px;width:64px">H</div>
<div class="vl" style="left:668px"></div>
<div class="ch" style="left:669px;width:64px">I</div>
<div class="vl" style="left:732px"></div>
<div class="ch" style="left:733px;width:64px">J</div>
<div class="vl" style="left:796px"></div>
<div class="ch" style="left:797px;width:64px">K</div>
<div class="vl" style="left:860px"></div>
<div class="ch" style="left:861px;width:64px">L</div>
<div class="vl" style="left:924px"></div>
<div class="ch" style="left:925px;width:64px">M</div>
<div class="vl" style="left:988px"></div>
<div class="ch" style="left:989px;width:32px"></div>
<div class="vl" style="left:1020px"></div>
<div class="rh" style="top:20px">2</div>
<div class="hl" style="top:39px"></div>
<div class="rh" style="top:40px">3</div>
<div class="hl" style="top:59px"></div>
<div class="rh" style="top:60px">4</div>
<div class="hl" style="top:79px"></div>
<div class="rh" style="top:80px">5</div>
<div class="hl" style="top:99px"></div>
<div class="rh" style="top:100px">6</div>
<div class="hl" style="top:119px"></div>
<div class="rh" style="top:120px">7</div>
<div class="hl" style="top:139px"></div>
<div class="rh" style="top:140px">8</div>
<div class="hl" style="top:159px"></div>
<div class="rh" style="top:160px">9</div>
<div class="hl" style="top:179px"></div>
<div class="rh" style="top:180px">10</div>
<div class="hl" style="top:199px"></div>
<div class="rh" style="top:200px">11</div>
<div class="hl" style="top:219px"></div>
<div class="rh" style="top:220px">12</div>
<div class="hl" style="top:239px"></div>
<div class="rh" style="top:240px">13</div>
<div class="hl" style="top:259px"></div>
<div class="rh" style="top:260px">14</div>
<div class="hl" style="top:279px"></div>
<div class="rh" style="top:280px">15</div>
<div class="hl" style="top:299px"></div>
<div class="rh" style="top:300px">16</div>
<div class="hl" style="top:319px"></div>
<div class="rh" style="top:320px">17</div>
<div class="hl" style="top:339px"></div>
<div class="rh" style="top:340px">18</div>
<div class="hl" style="top:359px"></div>
<div class="rh" style="top:360px">19</div>
<div class="hl" style="top:379px"></div>
<div class="rh" style="top:380px">20</div>
<div class="hl" style="top:399px"></div>
<div class="rh" style="top:400px">21</div>
<div class="hl" style="top:419px"></div>
<div class="rh" style="top:420px">22</div>
<div class="hl" style="top:439px"></div>
<div class="rh" style="top:440px">23</div>
<div class="hl" style="top:459px"></div>
<div class="rh" style="top:460px">24</div>
<div class="hl" style="top:479px"></div>
<div class="rh" style="top:480px">25</div>
<div class="hl" style="top:499px"></div>
<div class="rh" style="top:500px">26</div>
<div class="hl" style="top:519px"></div>
<div class="rh" style="top:520px">27</div>
<div class="hl" style="top:539px"></div>
<div class="c" style="left:28px;top:20px">Иванов</div>
<div class="c r" style="left:125px;width:62px;top:20px">17</div>
<div class="c r" style="left:189px;width:88px;top:20px">23</div>
<div class="c r" style="left:279px;width:75px;top:20px">720000</div>
<div class="c r" style="left:356px;width:61px;top:20px">3</div>
<div class="c r" style="left:419px;width:99px;top:20px">57600</div>
<div class="c r" style="left:520px;width:83px;top:20px">662400</div>
<div class="c" style="left:28px;top:40px">Петров</div>
<div class="c r" style="left:125px;width:62px;top:40px">11</div>
<div class="c r" style="left:189px;width:88px;top:40px">17</div>
<div class="c r" style="left:279px;width:75px;top:40px">354783</div>
<div class="c r" style="left:356px;width:61px;top:40px">2</div>
<div class="c r" style="left:419px;width:99px;top:40px">42574</div>
<div class="c r" style="left:520px;width:83px;top:40px">312209</div>
<div class="c" style="left:28px;top:60px">Сидоров</div>
<div class="c r" style="left:125px;width:62px;top:60px">15</div>
<div class="c r" style="left:189px;width:88px;top:60px">15</div>
<div class="c r" style="left:279px;width:75px;top:60px">417391</div>
<div class="c r" style="left:356px;width:61px;top:60px">2</div>
<div class="c r" style="left:419px;width:99px;top:60px">50087</div>
<div class="c r" style="left:520px;width:83px;top:60px">367304</div>
<div class="c" style="left:28px;top:80px">Кукушкин</div>
<div class="c r" style="left:125px;width:62px;top:80px">8</div>
<div class="c r" style="left:189px;width:88px;top:80px">22</div>
<div class="c r" style="left:279px;width:75px;top:80px">344348</div>
<div class="c r" style="left:356px;width:61px;top:80px">4</div>
<div class="c r" style="left:419px;width:99px;top:80px">41322</div>
<div class="c r" style="left:520px;width:83px;top:80px">303026</div>
<div class="c" style="left:28px;top:100px">Павленко</div>
<div class="c r" style="left:125px;width:62px;top:100px">7</div>
<div class="c r" style="left:189px;width:88px;top:100px">23</div>
<div class="c r" style="left:279px;width:75px;top:100px">320000</div>
<div class="c r" style="left:356px;width:61px;top:100px">3</div>
<div class="c r" style="left:419px;width:99px;top:100px">38400</div>
<div class="c r" style="left:520px;width:83px;top:100px">281600</div>
<div class="c" style="left:28px;top:120px">Давыдова</div>
<div class="c r" style="left:125px;width:62px;top:120px">12</div>
<div class="c r" style="left:189px;width:88px;top:120px">20</div>
<div class="c r" style="left:279px;width:75px;top:120px">452174</div>
<div class="c r" style="left:356px;width:61px;top:120px">1</div>
<div class="c r" style="left:419px;width:99px;top:120px">54261</div>
<div class="c r" style="left:520px;width:83px;top:120px">397913</div>
<div class="bv" style="left:124px;top:20px;height:120px"></div>
<div class="bv" style="left:188px;top:20px;height:120px"></div>
<div class="bv" style="left:278px;top:20px;height:120px"></div>
<div class="bv" style="left:355px;top:20px;height:120px"></div>
<div class="bv" style="left:418px;top:20px;height:120px"></div>
<div class="bv" style="left:519px;top:20px;height:120px"></div>
<div class="bv" style="left:604px;top:20px;height:120px"></div>
<div class="bh" style="left:26px;top:39px;width:579px"></div>
<div class="bh" style="left:26px;top:59px;width:579px"></div>
<div class="bh" style="left:26px;top:79px;width:579px"></div>
<div class="bh" style="left:26px;top:99px;width:579px"></div>
<div class="bh" style="left:26px;top:119px;width:579px"></div>
<div class="bh" style="left:26px;top:139px;width:579px"></div>
</div>
<div class="a" style="left:235px;top:315px;width:554px;height:365px;border:2px solid #d1dcdc;border-radius:6px;background:linear-gradient(rgba(242,252,252,.8) 0,rgba(242,252,252,.8) 5px,rgba(222,250,251,.8) 7px,rgba(222,250,251,.8) 354px,rgba(242,252,252,.8) 356px,rgba(242,252,252,.8) 361px)"></div>
<div class="a" style="left:242px;top:322px;width:541px;height:352px;border:1px solid #a5adad;background:#e9fbfc"><div style="width:100%;height:100%;background:#fff;border-radius:7px"></div></div>
<div class="a" style="left:239px;top:319px;width:2px;height:2px;background:#6a6666"></div><div class="a" style="left:243px;top:319px;width:2px;height:2px;background:#6a6666"></div><div class="a" style="left:239px;top:323px;width:2px;height:2px;background:#6a6666"></div>
<div class="a" style="left:779px;top:319px;width:2px;height:2px;background:#6a6666"></div><div class="a" style="left:783px;top:319px;width:2px;height:2px;background:#6a6666"></div><div class="a" style="left:783px;top:323px;width:2px;height:2px;background:#6a6666"></div>
<div class="a" style="left:239px;top:670px;width:2px;height:2px;background:#6a6666"></div><div class="a" style="left:239px;top:674px;width:2px;height:2px;background:#6a6666"></div><div class="a" style="left:243px;top:674px;width:2px;height:2px;background:#6a6666"></div>
<div class="a" style="left:783px;top:670px;width:2px;height:2px;background:#6a6666"></div><div class="a" style="left:783px;top:674px;width:2px;height:2px;background:#6a6666"></div><div class="a" style="left:779px;top:674px;width:2px;height:2px;background:#6a6666"></div>
<div class="a" style="left:505px;top:318px;width:2px;height:2px;background:#6a6666"></div><div class="a" style="left:509px;top:318px;width:2px;height:2px;background:#6a6666"></div><div class="a" style="left:513px;top:318px;width:2px;height:2px;background:#6a6666"></div><div class="a" style="left:517px;top:318px;width:2px;height:2px;background:#6a6666"></div>
<div class="a" style="left:505px;top:675px;width:2px;height:2px;background:#6a6666"></div><div class="a" style="left:509px;top:675px;width:2px;height:2px;background:#6a6666"></div><div class="a" style="left:513px;top:675px;width:2px;height:2px;background:#6a6666"></div><div class="a" style="left:517px;top:675px;width:2px;height:2px;background:#6a6666"></div>
<div class="a" style="left:238px;top:491px;width:2px;height:2px;background:#6a6666"></div><div class="a" style="left:238px;top:495px;width:2px;height:2px;background:#6a6666"></div><div class="a" style="left:238px;top:499px;width:2px;height:2px;background:#6a6666"></div><div class="a" style="left:238px;top:503px;width:2px;height:2px;background:#6a6666"></div>
<div class="a" style="left:784px;top:491px;width:2px;height:2px;background:#6a6666"></div><div class="a" style="left:784px;top:495px;width:2px;height:2px;background:#6a6666"></div><div class="a" style="left:784px;top:499px;width:2px;height:2px;background:#6a6666"></div><div class="a" style="left:784px;top:503px;width:2px;height:2px;background:#6a6666"></div>
<div class="t" style="left:420px;top:335px;font-size:20.5px;font-weight:bold;color:#000;line-height:24px;height:24px;letter-spacing:-.1px">Заработная плата</div>
<svg style="left:0;top:0" width="1024" height="768" viewBox="0 0 1024 768" shape-rendering="crispEdges"><rect x="310" y="629" width="366" height="1" fill="#868686"/><rect x="310" y="601" width="366" height="1" fill="#868686"/><rect x="310" y="573" width="366" height="1" fill="#868686"/><rect x="310" y="545" width="366" height="1" fill="#868686"/><rect x="310" y="517" width="366" height="1" fill="#868686"/><rect x="310" y="490" width="366" height="1" fill="#868686"/><rect x="310" y="462" width="366" height="1" fill="#868686"/><rect x="310" y="434" width="366" height="1" fill="#868686"/><rect x="310" y="406" width="366" height="1" fill="#868686"/><rect x="310" y="378" width="366" height="1" fill="#868686"/><rect x="321" y="412" width="39" height="16" fill="#d19392"/><rect x="321" y="428" width="39" height="201" fill="#aa4643"/><rect x="382" y="519" width="39" height="12" fill="#d19392"/><rect x="382" y="531" width="39" height="98" fill="#aa4643"/><rect x="442" y="499" width="39" height="14" fill="#d19392"/><rect x="442" y="513" width="39" height="116" fill="#aa4643"/><rect x="503" y="522" width="39" height="12" fill="#d19392"/><rect x="503" y="534" width="39" height="95" fill="#aa4643"/><rect x="564" y="530" width="39" height="10" fill="#d19392"/><rect x="564" y="540" width="39" height="89" fill="#aa4643"/><rect x="625" y="488" width="39" height="15" fill="#d19392"/><rect x="625" y="503" width="39" height="126" fill="#aa4643"/><rect x="256.5" y="369.500" width="53" height="268" fill="none" stroke="#7f7f7f" stroke-width="1"/></svg>
<div class="a" style="left:254.0px;top:367.0px;width:5px;height:5px;border-radius:50%;border:1px solid #4f7ab5;background:#b9d6e8"></div>
<div class="a" style="left:307.0px;top:367.0px;width:5px;height:5px;border-radius:50%;border:1px solid #4f7ab5;background:#b9d6e8"></div>
<div class="a" style="left:254.0px;top:635.0px;width:5px;height:5px;border-radius:50%;border:1px solid #4f7ab5;background:#b9d6e8"></div>
<div class="a" style="left:307.0px;top:635.0px;width:5px;height:5px;border-radius:50%;border:1px solid #4f7ab5;background:#b9d6e8"></div>
<div class="t cf" style="left:247.5px;width:50px;text-align:right;top:623px">0</div>
<div class="t cf" style="left:247.5px;width:50px;text-align:right;top:595px">100000</div>
<div class="t cf" style="left:247.5px;width:50px;text-align:right;top:567px">200000</div>
<div class="t cf" style="left:247.5px;width:50px;text-align:right;top:539px">300000</div>
<div class="t cf" style="left:247.5px;width:50px;text-align:right;top:511px">400000</div>
<div class="t cf" style="left:247.5px;width:50px;text-align:right;top:483px">500000</div>
<div class="t cf" style="left:247.5px;width:50px;text-align:right;top:455px">600000</div>
<div class="t cf" style="left:247.5px;width:50px;text-align:right;top:427px">700000</div>
<div class="t cf" style="left:247.5px;width:50px;text-align:right;top:399px">800000</div>
<div class="t cf" style="left:247.5px;width:50px;text-align:right;top:371px">900000</div>
<div class="t cf" style="left:300.5px;width:80px;text-align:center;top:644px;font-size:11.2px;letter-spacing:.48px">Иванов</div>
<div class="t cf" style="left:361.5px;width:80px;text-align:center;top:644px;font-size:11.2px;letter-spacing:.48px">Петров</div>
<div class="t cf" style="left:421.5px;width:80px;text-align:center;top:644px;font-size:11.2px;letter-spacing:.48px">Сидоров</div>
<div class="t cf" style="left:482.5px;width:80px;text-align:center;top:644px;font-size:11.2px;letter-spacing:.48px">Кукушкин</div>
<div class="t cf" style="left:543.5px;width:80px;text-align:center;top:644px;font-size:11.2px;letter-spacing:.48px">Павленко</div>
<div class="t cf" style="left:604.5px;width:80px;text-align:center;top:644px;font-size:11.2px;letter-spacing:.48px">Давыдова</div>
<div class="a" style="left:697px;top:502px;width:7px;height:7px;background:#d19392"></div>
<div class="t cf" style="left:707px;top:499px;font-size:11.2px;letter-spacing:.55px">Удержано</div>
<div class="a" style="left:697px;top:527px;width:7px;height:7px;background:#aa4643"></div>
<div class="t cf" style="left:707px;top:523px;font-size:11.2px;letter-spacing:.5px">Начислено</div>
<!-- vertical scrollbar -->
<div class="a" style="left:1009px;top:169px;width:15px;height:531px;background:linear-gradient(to right,#6f92c4,#7a9ac8 40%,#88a7d1)"></div>
<div class="a" style="left:1009px;top:169px;width:15px;height:6px;background:#a9c3e6"></div>
<div class="a" style="left:1010px;top:170px;width:13px;height:5px;background:#fff;border:1px solid #7f9cc8"></div>
<div class="a" style="left:1013px;top:172px;width:7px;height:1px;background:#7f9cc8"></div>
<div class="a" style="left:1012px;top:181px;width:0;height:0;border-left:4.5px solid transparent;border-right:4.5px solid transparent;border-bottom:5px solid #3d4f7d"></div>
<div class="a" style="left:1009px;top:210px;width:15px;height:438px;border:1px solid #4f5f90;border-radius:2px;background:linear-gradient(to right,#e6e9ee 0,#eceff3 30%,#c6d0de 55%,#c9d3e1 75%,#e0e5ed 100%)"></div>
<div class="a" style="left:1013px;top:425px;width:8px;height:1px;background:#6f7278;box-shadow:0 2px 0 #6f7278,0 4px 0 #6f7278,0 6px 0 #6f7278"></div>
<div class="a" style="left:1012px;top:689px;width:0;height:0;border-left:4.5px solid transparent;border-right:4.5px solid transparent;border-top:5px solid #3d4f7d"></div>
<!-- sheet tab bar -->
<div class="a" style="left:0;top:700px;width:1024px;height:16px;background:linear-gradient(#7d9dcc 0,#98b3da 3px,#a1bade 6px,#9db6db 16px)"></div>
<div class="a" style="left:0;top:700px;width:62px;height:16px;background:linear-gradient(#8ea5c8 0,#8ea5c8 1px,#cbddf5 1px,#c1d6f2 7px,#b4ceee 8px,#c6d9f3 16px)"></div>
<div class="a" style="left:62px;top:701px;width:1px;height:15px;background:#e6effa"></div>
<svg style="left:4px;top:703px" width="56" height="10" viewBox="0 0 56 10" fill="#1d4a8d"><rect x="2" y="1" width="1.500" height="8"/><path d="M8.500 1 L3.500 5 L8.500 9Z"/><path d="M22.500 1 L17.500 5 L22.500 9Z"/><path d="M32 1 L37 5 L32 9Z"/><path d="M46 1 L51 5 L46 9Z"/><rect x="51" y="1" width="1.500" height="8"/></svg>
<svg style="left:0;top:700px" width="470" height="16" viewBox="0 0 470 16">
 <defs><linearGradient id="tg" x1="0" y1="0" x2="0" y2="1"><stop offset="0" stop-color="#f7fafe"/><stop offset=".45" stop-color="#dfe9f8"/><stop offset=".5" stop-color="#d0dff4"/><stop offset="1" stop-color="#c3d6f0"/></linearGradient></defs>
 <path d="M408.500 15.500 L420 .5 H453.500 L440 15.500 Z" fill="url(#tg)" stroke="#7f98c0"/>
 <path d="M355 15.500 L366.500 .5 H420 L408.500 15.500 Z" fill="url(#tg)" stroke="#7f98c0"/>
 <path d="M301 15.500 L313 .5 H366.500 L355 15.500 Z" fill="url(#tg)" stroke="#7f98c0"/>
 <path d="M63.500 .5 V12 Q63.500 15.500 67 15.500 H154 L168 .5 Z" fill="url(#tg)" stroke="#7f98c0"/>
 <path d="M154 15.500 L168 .5 H250.500 V15.500 Z" fill="url(#tg)" stroke="#7f98c0"/>
 <path d="M250 0 H313 L301 16 H254 Q250 16 250 12 Z" fill="#fff"/>
 <path d="M250.500 0 V12 Q250.500 15.500 254 15.500 H301 L313 .5" fill="none" stroke="#6a82ad"/>
</svg>
<div class="t" style="left:77px;top:702px;font-size:12px;color:#1f3a7a">Диаграмма1</div>
<div class="t" style="left:171px;top:702px;font-size:12px;color:#1f3a7a">Диаграмма2</div>
<div class="t" style="left:259.500px;top:702px;font-size:12.5px;font-weight:bold;color:#1b2c55">Лист1</div>
<div class="t" style="left:314px;top:702px;font-size:12.5px;color:#1f3a7a">Лист2</div>
<div class="t" style="left:366.500px;top:702px;font-size:12.5px;color:#1f3a7a">Лист3</div>
<svg style="left:421px;top:701px" width="17" height="13" viewBox="0 0 17 13"><path d="M5.500 3.500 H15.500 V10 Q12 12.500 9 11.500 T5.500 11 Z" fill="#f7f9fc" stroke="#5a6a86"/><path d="M4 0 L5 3 L8 4 L5 5 L4 8 L3 5 L0 4 L3 3Z" fill="#f4b21e" stroke="#c98a0a" stroke-width=".4"/></svg>
<!-- horizontal scrollbar -->
<div class="a" style="left:604px;top:700px;width:405px;height:16px;background:#809ecc"></div>
<div class="a" style="left:604px;top:700px;width:405px;height:1px;background:#6f8bbd"></div>
<div class="a" style="left:606px;top:702px;width:5px;height:13px;background:#fff;border:1px solid #6f88b0"></div>
<div class="a" style="left:615px;top:703px;width:0;height:0;border-top:5px solid transparent;border-bottom:5px solid transparent;border-right:6px solid #2f4674"></div>
<div class="a" style="left:629px;top:701px;width:301px;height:14px;border:1px solid #7a8fb3;border-radius:2px;background:linear-gradient(#f3f5f9,#e3e8ef 45%,#c9d1dd)"></div>
<div class="a" style="left:775px;top:704px;width:1px;height:8px;background:#7d8aa0;box-shadow:2px 0 0 #7d8aa0,4px 0 0 #7d8aa0,6px 0 0 #7d8aa0"></div>
<div class="a" style="left:991px;top:703px;width:0;height:0;border-top:5px solid transparent;border-bottom:5px solid transparent;border-left:6px solid #2f4674"></div>
<div class="a" style="left:1003px;top:702px;width:5px;height:13px;background:#fff;border:1px solid #6f88b0"></div>
<div class="a" style="left:1009px;top:700px;width:15px;height:16px;background:#7b9bcb"></div>
<!-- status bar -->
<div class="a" style="left:0;top:716px;width:1024px;height:22px;background:linear-gradient(#4f77b0 0,#4f77b0 1px,#f4f8fd 1px,#f4f8fd 2px,#d6e6fa 2px,#c9dcf6 8px,#b0cdf0 8px,#c3d8f4 15px,#d5e4f7 22px)"></div>
<div class="t" style="left:7px;top:720px;font-size:11.5px;color:#15428b">Готово</div>
<div class="a" style="left:60px;top:718px;width:1px;height:19px;background:#9fb8dc"></div><div class="a" style="left:61px;top:718px;width:1px;height:19px;background:#eef4fd"></div>
<div class="a" style="left:780px;top:718px;width:244px;height:20px;background:linear-gradient(#c3d7f2 0,#b4ccec 7px,#9bbae5 8px,#a3c0e8 15px,#c3d8f3 20px)"></div>
<div class="a" style="left:778px;top:717px;width:1px;height:21px;background:#8fa9d3"></div><div class="a" style="left:779px;top:717px;width:1px;height:21px;background:#eef4fd"></div>
<div class="a" style="left:784px;top:718px;width:57px;height:19px;border:1px solid #d3e0f3;border-radius:2px;background:linear-gradient(#d9e6f7,#c3d6f0 50%,#b3caeb)"></div>
<div class="a" style="left:785px;top:719px;width:18px;height:17px;background:linear-gradient(#fde6ae 0,#fbd686 45%,#f8bd48 50%,#fbd37a 100%)"></div>
<div class="a" style="left:803px;top:719px;width:1px;height:17px;background:#d3e0f3"></div><div class="a" style="left:822px;top:719px;width:1px;height:17px;background:#d3e0f3"></div>
<svg style="left:788px;top:722px" width="13" height="10" viewBox="0 0 13 10"><rect x="0" y="0" width="13" height="10" fill="#3a3a3a"/><path d="M1 1h3v2h-3zM5 1h3v2h-3zM9 1h3v2h-3zM1 4h3v2h-3zM5 4h3v2h-3zM9 4h3v2h-3zM1 7h3v2h-3zM5 7h3v2h-3zM9 7h3v2h-3z" fill="#fff"/></svg>
<svg style="left:806px;top:721px" width="13" height="12" viewBox="0 0 13 12"><rect x=".5" y=".5" width="12" height="11" fill="#a9abae" stroke="#5a5a5a"/><rect x="4" y="2.500" width="5" height="7" fill="#fff"/><path d="M5 4.500h3M5 6.500h3" stroke="#999"/></svg>
<svg style="left:825px;top:721px" width="13" height="12" viewBox="0 0 13 12"><rect x=".5" y=".5" width="12" height="11" fill="#a9abae" stroke="#5a5a5a"/><path d="M1.500 1.500 H4 V7 H1.500Z M5 1.500 H8 V7 H5Z" fill="#fff"/><rect x="1.500" y="7.500" width="10" height="3" fill="#c9cbce"/></svg>
<div class="t" style="left:848.500px;top:721px;font-size:11px;color:#1e3a7a">100%</div>
<div class="a" style="left:901px;top:727px;width:102px;height:1px;background:#7d94ba"></div><div class="a" style="left:901px;top:728px;width:102px;height:1px;background:#f2f6fc"></div>
<div class="a" style="left:885px;top:719px;width:16px;height:16px;border-radius:50%;border:1px solid #6d7f9e;background:radial-gradient(circle at 50% 30%,#fff,#dde5f0 60%,#b9c6da)"></div>
<div class="a" style="left:889px;top:726px;width:8px;height:2px;background:#4a5a78"></div>
<div class="a" style="left:1003px;top:719px;width:16px;height:16px;border-radius:50%;border:1px solid #6d7f9e;background:radial-gradient(circle at 50% 30%,#fff,#dde5f0 60%,#b9c6da)"></div>
<div class="a" style="left:1007px;top:726px;width:8px;height:2px;background:#4a5a78"></div><div class="a" style="left:1010px;top:723px;width:2px;height:8px;background:#4a5a78"></div>
<svg style="left:946px;top:720px" width="11" height="15" viewBox="0 0 11 15"><path d="M.5 .5 H10.500 V9 L5.500 14 L.5 9 Z" fill="#e9eef6" stroke="#5d6f90"/><path d="M5.500 3 V10" stroke="#8a99b4"/></svg>
<!-- taskbar -->
<div class="a" style="left:0;top:738px;width:1024px;height:30px;background:linear-gradient(#3168d5 0,#4993e6 2px,#2a63d8 4px,#2459d5 6px,#245edb 16px,#2663e0 24px,#1f50b8 28px,#1941a5 30px)"></div>
<div class="a" style="left:0;top:738px;width:97px;height:30px;border-radius:0 12px 12px 0;background:linear-gradient(#3a8a3a 0,#5eb75e 2px,#3f9a3f 6px,#378f37 16px,#3a963a 24px,#2d772d 30px);box-shadow:1px 0 3px rgba(0,20,80,.6)"></div>
<svg style="left:10px;top:743px" width="20" height="20" viewBox="0 0 20 20"><path d="M2 3.500 C4.500 2 6.500 2 9 3.500 L8 9.500 C5.800 8.200 3.800 8.200 1 9.500Z" fill="#e8492a"/><path d="M10.500 4 C13 5.500 15 5.500 18 4 L17 10 C14.500 11.500 12.200 11.500 9.500 10Z" fill="#7dc242"/><path d="M.8 11 C3.600 9.700 5.600 9.700 7.800 11 L6.800 17 C4.600 15.700 2.600 15.700 0 17Z" fill="#3a8ee6"/><path d="M9.300 11.500 C12 13 14.300 13 16.800 11.500 L15.800 17.500 C13.300 19 11 19 8.300 17.500Z" fill="#f8c72a"/></svg>
<div class="t" style="left:35px;top:743px;font-size:18px;font-weight:bold;font-style:italic;color:#fff;line-height:21px;height:21px;text-shadow:1px 1px 1px #1d4a1d;letter-spacing:-.8px">пуск</div>
<div class="a" style="left:106px;top:741px;width:159px;height:24px;border-radius:3px;background:#1e52b7;border:1px solid #163f93;box-shadow:inset 1px 1px 2px #123680"></div>
<svg style="left:116px;top:745px" width="16" height="16" viewBox="0 0 16 16"><rect x="1.500" y="1.500" width="13" height="13" fill="#f2f7f0" stroke="#2f7a2f"/><rect x="1" y="3" width="10" height="11" fill="#2f8a3a"/><path d="M3 5.500 L9 12 M9 5.500 L3 12" stroke="#fff" stroke-width="1.800"/></svg>
<div class="t" style="left:135px;top:747px;font-size:11px;color:#fff">Microsoft Excel - Кни...</div>
<div class="a" style="left:266px;top:741px;width:159px;height:24px;border-radius:3px;background:linear-gradient(#4a8cf6,#3c80f0 30%,#3a7ceb);border:1px solid #2a5fc9"></div>
<svg style="left:276px;top:745px" width="16" height="16" viewBox="0 0 16 16"><path d="M3.500 1.500 H12 L14.500 4 V14.500 H3.500Z" fill="#fff" stroke="#4a5a7a"/><rect x="1" y="3" width="9" height="9" fill="#2f5fc0"/><path d="M2.500 5 L4 10.500 L5.500 6.500 L7 10.500 L8.500 5" fill="none" stroke="#fff" stroke-width="1.200"/></svg>
<div class="t" style="left:295px;top:747px;font-size:10.8px;color:#fff">Лекция 2ГРАФИЧЕС...</div>
<!-- tray -->
<div class="a" style="left:896px;top:746px;width:16px;height:16px;background:#3a6fd8"></div>
<div class="t" style="left:897px;top:747px;font-size:11px;color:#fff">RU</div>
<div class="a" style="left:932px;top:738px;width:92px;height:30px;background:linear-gradient(#1a7bdc 0,#3fb0f5 2px,#1c9bee 5px,#1290e8 16px,#1596ee 24px,#0f78cc 30px);border-left:1px solid #0d5cb0"></div>
<div class="a" style="left:922px;top:744px;width:18px;height:18px;border-radius:50%;background:radial-gradient(circle at 40% 35%,#7fc2ff,#2d82e6 60%,#1a5fc6);border:1px solid #cfe6ff"></div>
<svg style="left:927px;top:749px" width="8" height="9" viewBox="0 0 8 9"><path d="M6 1 L2 4.500 L6 8" fill="none" stroke="#fff" stroke-width="2"/></svg>
<svg style="left:941px;top:744px" width="20" height="20" viewBox="0 0 20 20"><rect x="1" y="5" width="8" height="7" fill="#bfe0ff" stroke="#2a4a8a" stroke-width=".8"/><rect x="2" y="13" width="7" height="2" fill="#dfe9f7"/><path d="M11 3 q2.500 2.500 0 5 M13.500 1.500 q3.500 4 0 8 M16 .5 q4 5 0 10" fill="none" stroke="#39d339" stroke-width="1.200"/></svg>
<svg style="left:960px;top:745px" width="16" height="17" viewBox="0 0 16 17"><rect x="0" y="12" width="3" height="4" fill="#19c219"/><rect x="4" y="9" width="3" height="7" fill="#19c219"/><rect x="8" y="5" width="3" height="11" fill="#19c219"/><rect x="12" y="0" width="3" height="16" fill="#fff"/></svg>
<div class="t" style="left:983px;top:747px;font-size:11px;color:#fff">18:13</div>
</body></html>
